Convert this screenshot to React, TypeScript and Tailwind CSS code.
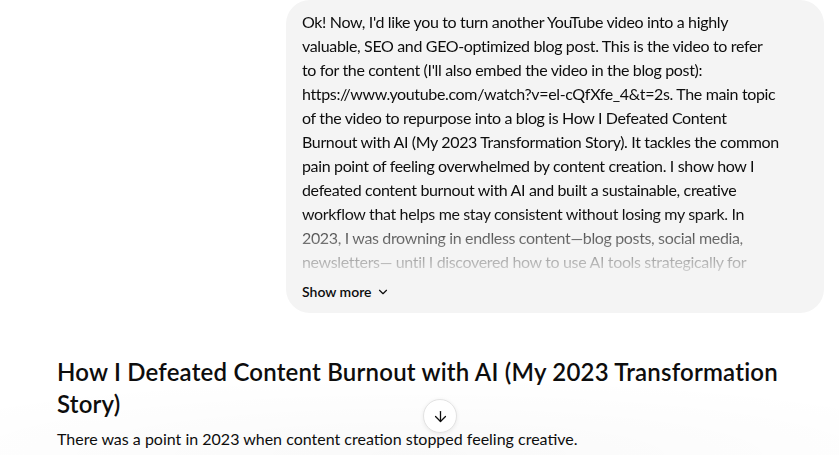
import { ArrowDown, ChevronDown } from 'lucide-react'

const promptLines = [
  "Ok! Now, I'd like you to turn another YouTube video into a highly",
  'valuable, SEO and GEO-optimized blog post. This is the video to refer',
  "to for the content (I'll also embed the video in the blog post):",
  'https://www.youtube.com/watch?v=el-cQfXfe_4&t=2s. The main topic',
  'of the video to repurpose into a blog is How I Defeated Content',
  'Burnout with AI (My 2023 Transformation Story). It tackles the common',
  'pain point of feeling overwhelmed by content creation. I show how I',
  'defeated content burnout with AI and built a sustainable, creative',
  'workflow that helps me stay consistent without losing my spark. In',
  '2023, I was drowning in endless content\u2014blog posts, social media,',
  'newsletters\u2014 until I discovered how to use AI tools strategically for',
]

const UserBubble = () => (
  <div className="flex justify-end">
    <div className="w-[538px] rounded-[24px] bg-[#f4f4f4] px-4 pt-[10px] pb-[11px]">
      <div className="text-[16px] leading-6 tracking-[-0.35px] text-[#0d0d0d] [mask-image:linear-gradient(to_bottom,black_77%,transparent_103%)]">
        {promptLines.map((line) => (
          <div key={line} className="whitespace-nowrap">
            {line}
          </div>
        ))}
      </div>
      <button className="mt-2 flex items-center gap-1 text-[14px] leading-5 font-semibold text-[#0d0d0d]">
        Show more
        <ChevronDown size={14} strokeWidth={2} />
      </button>
    </div>
  </div>
)

export default function App() {
  return (
    <div
      className="relative h-[455px] w-full overflow-hidden bg-white"
      style={{ fontFamily: 'Lato, "Noto Sans", sans-serif' }}
    >
      <main className="pl-[57px] pr-[15px]">
        <UserBubble />
        <article className="mt-[43px] max-w-[740px] text-[#0d0d0d]">
          <h2 className="text-[24px] leading-8 font-semibold tracking-[0.2px]">
            How I Defeated Content Burnout with AI (My 2023 Transformation Story)
          </h2>
          <p className="mt-[7px] text-[16px] leading-6">
            There was a point in 2023 when content creation stopped feeling creative.
          </p>
        </article>
      </main>

      <div className="pointer-events-none absolute inset-x-0 bottom-0 h-[80px] bg-[radial-gradient(ellipse_70%_100%_at_50%_100%,rgba(0,0,0,0.025),transparent)]" />

      <button className="absolute top-[399px] left-[423px] flex h-[34px] w-[34px] items-center justify-center rounded-full border border-[#e3e3e3] bg-white text-[#0d0d0d] shadow-[0_1px_4px_rgba(0,0,0,0.08)]">
        <ArrowDown size={17} strokeWidth={1.8} />
      </button>
    </div>
  )
}
